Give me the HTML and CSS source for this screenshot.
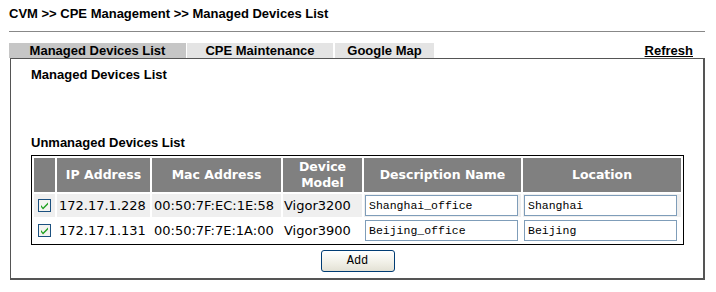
FILE: index.html
```html
<!DOCTYPE html>
<html>
<head>
    <title>CVM - Managed Devices List</title>
    <link rel="stylesheet" href="styles.css">
</head>
<body>
    <div class="page">
        <div class="page-title">CVM &gt;&gt; CPE Management &gt;&gt; Managed Devices List</div>
        <div class="title-rule"></div>

        <div class="tab-bar">
            <div class="tabs">
                <div class="tab active">Managed Devices List</div>
                <div class="tab tab-cpe">CPE Maintenance</div>
                <div class="tab tab-map">Google Map</div>
            </div>
            <a class="refresh" href="#">Refresh</a>
        </div>

        <div class="panel">
            <div class="section-title">Managed Devices List</div>
            <div class="managed-space"></div>
            <div class="section-title">Unmanaged Devices List</div>

            <table class="dev-table">
                <colgroup>
                    <col class="c-check">
                    <col class="c-ip">
                    <col class="c-mac">
                    <col class="c-model">
                    <col class="c-desc">
                    <col class="c-loc">
                </colgroup>
                <thead>
                    <tr>
                        <th></th>
                        <th>IP Address</th>
                        <th>Mac Address</th>
                        <th>Device<br>Model</th>
                        <th>Description Name</th>
                        <th>Location</th>
                    </tr>
                </thead>
                <tbody>
                    <tr class="row-odd">
                        <td class="check-cell">
                            <svg class="cbox" width="13" height="13" viewBox="0 0 13 13">
                                <rect x="0.5" y="0.5" width="12" height="12" fill="#f4f4f0" stroke="#1c5180"/>
                                <path d="M3 6 L5 8.5 L10 3.5 L10 5.5 L5 10.5 L3 8 Z" fill="#21a121"/>
                            </svg>
                        </td>
                        <td>172.17.1.228</td>
                        <td>00:50:7F:EC:1E:58</td>
                        <td class="model">Vigor3200</td>
                        <td class="input-cell"><input type="text" value="Shanghai_office"></td>
                        <td class="input-cell"><input type="text" value="Shanghai"></td>
                    </tr>
                    <tr>
                        <td class="check-cell">
                            <svg class="cbox" width="13" height="13" viewBox="0 0 13 13">
                                <rect x="0.5" y="0.5" width="12" height="12" fill="#f4f4f0" stroke="#1c5180"/>
                                <path d="M3 6 L5 8.5 L10 3.5 L10 5.5 L5 10.5 L3 8 Z" fill="#21a121"/>
                            </svg>
                        </td>
                        <td>172.17.1.131</td>
                        <td>00:50:7F:7E:1A:00</td>
                        <td class="model">Vigor3900</td>
                        <td class="input-cell"><input type="text" value="Beijing_office"></td>
                        <td class="input-cell"><input type="text" value="Beijing"></td>
                    </tr>
                </tbody>
            </table>

            <div class="actions">
                <button class="add-btn">Add</button>
            </div>
        </div>
    </div>
</body>
</html>
```

FILE: styles.css
```css
body {
    margin: 0;
    padding: 0;
    background: #fff;
    font-family: "Liberation Sans", Arial, sans-serif;
    color: #000;
}
.page {
    width: 696px;
    padding: 6px 0 0 9px;
}
.page-title {
    font-size: 13px;
    font-weight: bold;
    line-height: 16px;
}
.title-rule {
    height: 1px;
    background: #888;
    margin-top: 9px;
    width: 696px;
}
.tab-bar {
    display: flex;
    justify-content: space-between;
    align-items: flex-end;
    margin-top: 11px;
    height: 15px;
}
.tabs {
    display: flex;
    gap: 1px;
}
.tab {
    height: 15px;
    line-height: 15px;
    font-size: 13px;
    font-weight: bold;
    text-align: center;
    background: #e4e4e4;
}
.tab.active {
    width: 177px;
    background: #c6c6c6;
}
.tab-cpe {
    width: 146px;
}
.tab-map {
    width: 99px;
    margin-left: 1px;
}
.refresh {
    font-size: 13px;
    font-weight: bold;
    color: #000;
    line-height: 15px;
    margin-right: 12px;
}
.panel {
    height: 219px;
    border: 1px solid #555;
    border-right-width: 2px;
    border-bottom-width: 2px;
    padding: 0 0 0 20px;
    box-sizing: content-box;
    width: 672px;
    margin-left: 1px;
}
.section-title {
    font-size: 13px;
    font-weight: bold;
    line-height: 16px;
    padding-top: 8px;
}
.managed-space {
    height: 44px;
}
.dev-table {
    margin-top: 4px;
    border: 1px solid #000;
    border-collapse: separate;
    border-spacing: 2px;
    table-layout: fixed;
    width: 653px;
    font-family: "DejaVu Sans", Verdana, sans-serif;
    font-size: 13px;
}
.c-check { width: 21px; }
.c-ip { width: 93px; }
.c-mac { width: 129px; }
.c-model { width: 79px; }
.c-desc { width: 157px; }
.c-loc { width: 158px; }
.dev-table th {
    background: #808080;
    color: #fff;
    font-weight: bold;
    font-size: 12.5px;
    height: 34px;
    padding: 0;
    line-height: 16px;
    text-align: center;
}
.dev-table td {
    height: 23px;
    padding: 0 0 0 2px;
    white-space: nowrap;
    overflow: hidden;
}
.row-odd td {
    background: #efefef;
}
.dev-table td.check-cell {
    padding: 0;
    text-align: center;
}
.cbox {
    display: block;
    margin: 0 auto;
}
.dev-table td.model {
    padding-left: 1px;
}
.dev-table td.input-cell {
    padding: 0 0 0 1px;
}
.input-cell input {
    width: 153px;
    height: 21px;
    box-sizing: border-box;
    border: 1px solid #7f9db9;
    padding: 0 3px;
    font-family: "Liberation Mono", "Courier New", monospace;
    font-size: 11.5px;
    background: #fff;
    display: block;
}
.actions {
    display: flex;
    justify-content: center;
    width: 653px;
    margin-top: 5px;
}
.add-btn {
    width: 74px;
    height: 22px;
    border: 1px solid #003c74;
    border-radius: 3px;
    background: linear-gradient(#ffffff, #f0efe6 60%, #e3e1d5);
    font-family: "Liberation Mono", "Courier New", monospace;
    font-size: 12px;
    padding: 0;
}
```
